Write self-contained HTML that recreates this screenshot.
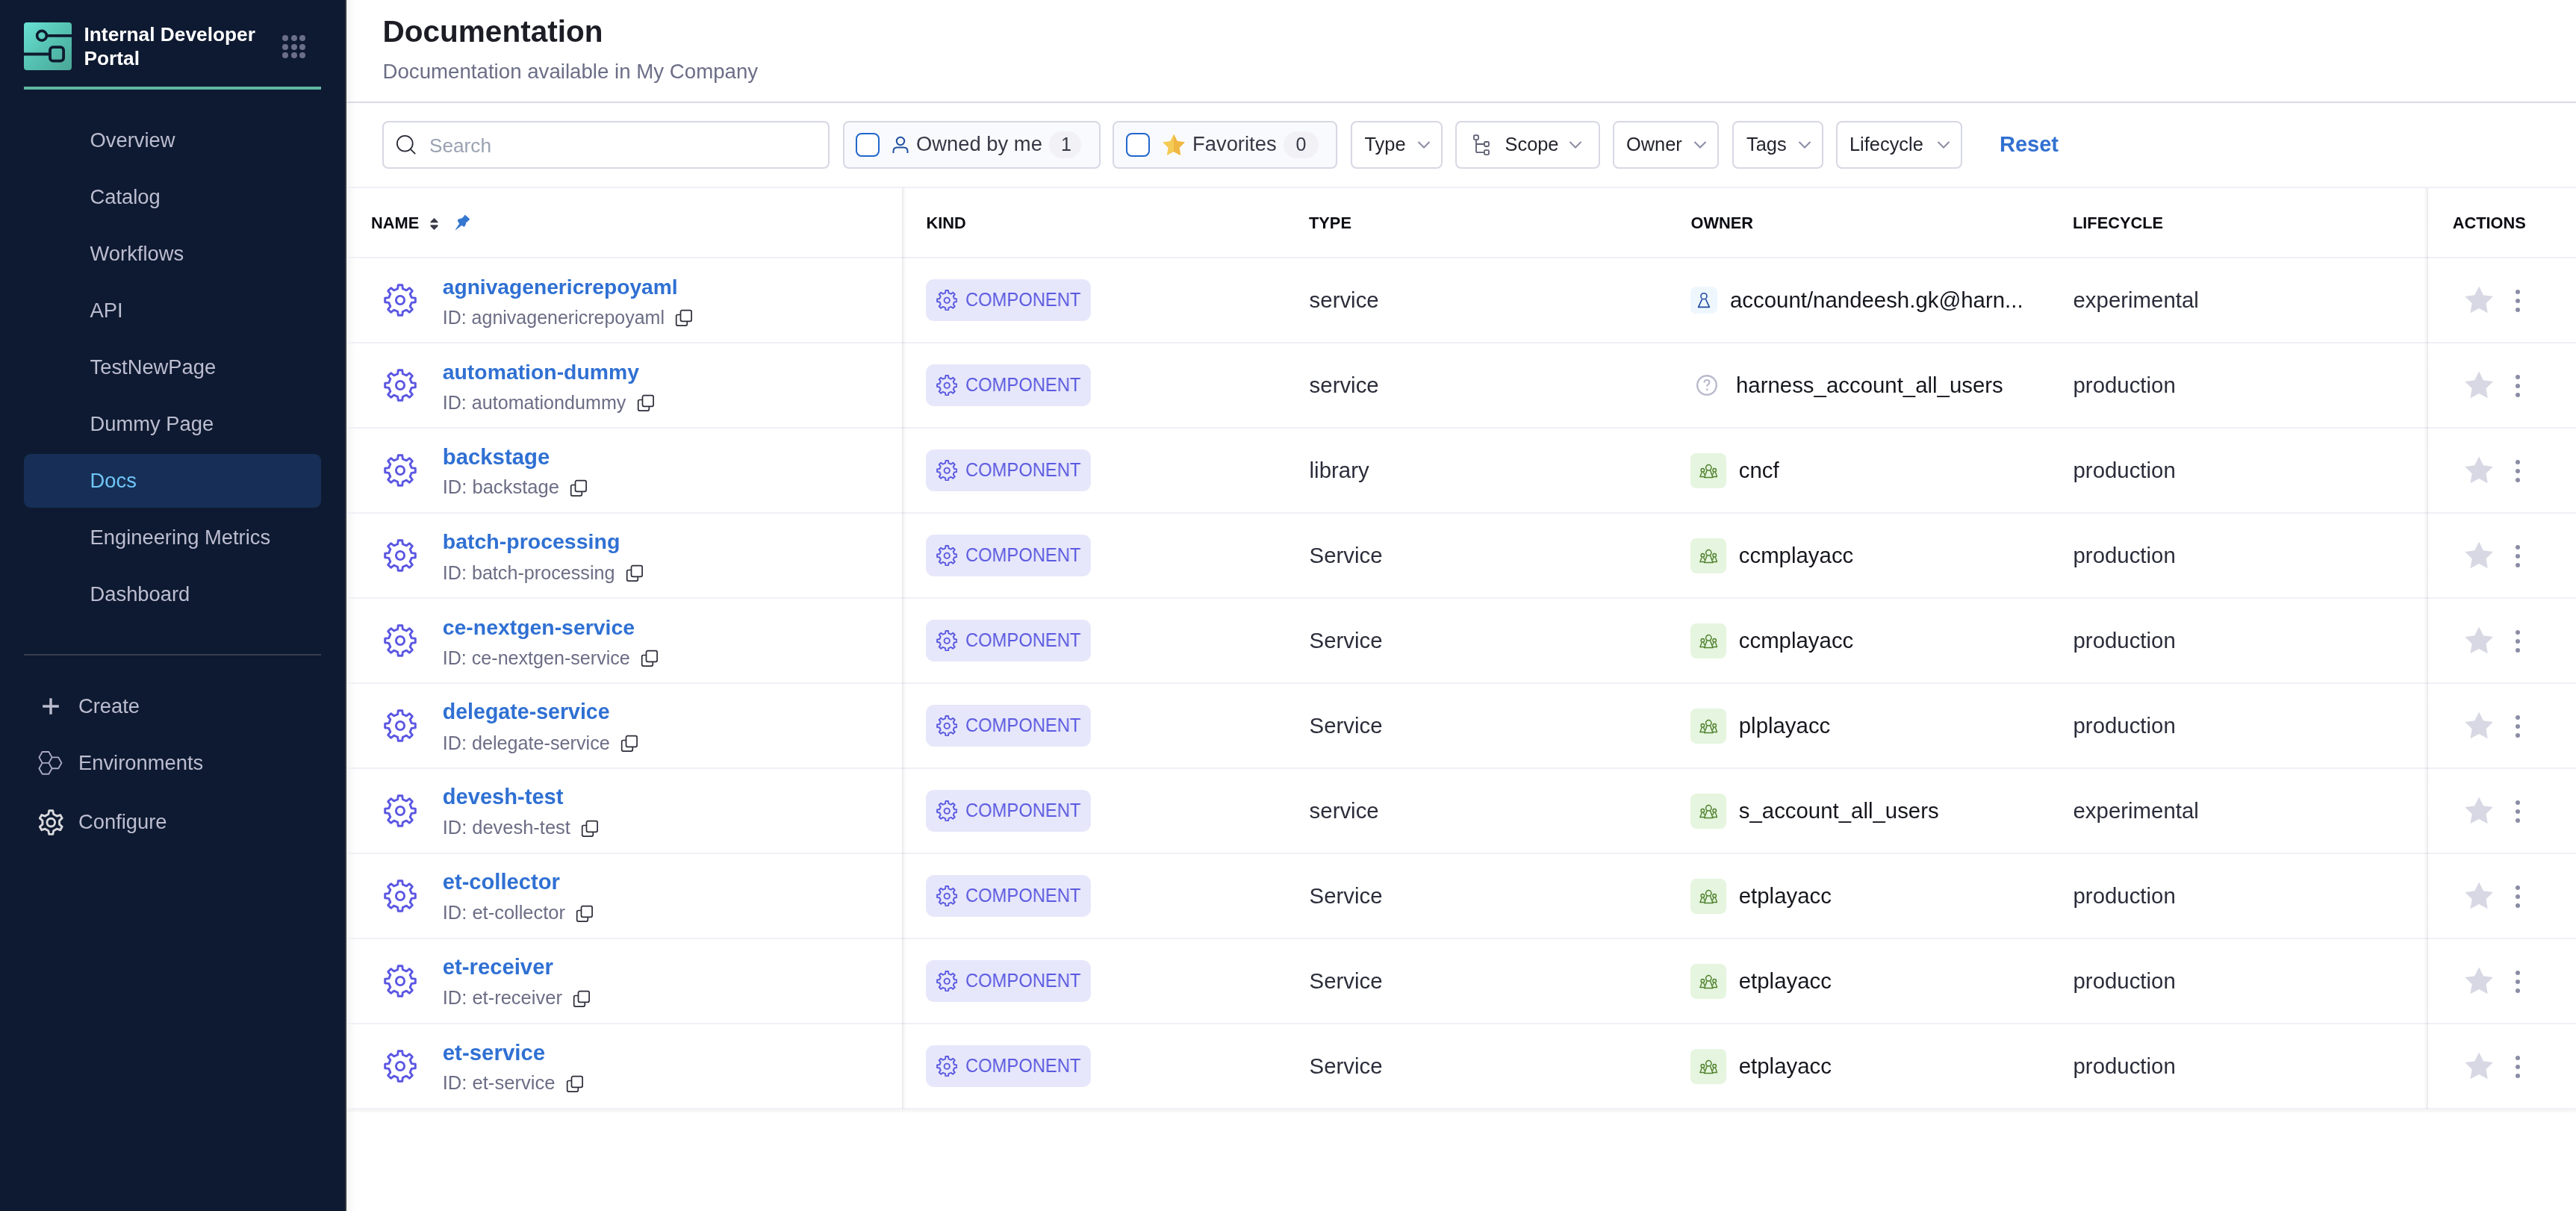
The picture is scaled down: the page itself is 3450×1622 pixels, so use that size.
<!DOCTYPE html><html><head><meta charset="utf-8"><style>
html,body{margin:0;padding:0;}
body{width:3450px;height:1622px;overflow:hidden;position:relative;background:#ffffff;font-family:"Liberation Sans", sans-serif;}
#root{position:absolute;left:0;top:0;width:3450px;height:1622px;will-change:transform;}
svg{display:block}
</style></head><body><div id="root">
<div style="position:absolute;left:0px;top:0px;width:463px;height:1622px;background:#0e1a31;"></div>
<div style="position:absolute;left:462px;top:0px;width:2px;height:1622px;background:#33363f;"></div>
<div style="position:absolute;left:464px;top:0;width:16px;height:1622px;background:linear-gradient(to right,rgba(0,0,0,0.05),rgba(0,0,0,0.022) 35%,rgba(0,0,0,0.006) 70%,rgba(0,0,0,0));"></div>
<div style="position:absolute;left:32px;top:30px;width:64px;height:64px;border-radius:4px;background:linear-gradient(135deg,#69e2d4 0%,#55c2b2 50%,#4aa697 100%);overflow:hidden">
<svg width="64" height="64" viewBox="0 0 64 64" style="position:absolute;left:0;top:0">
<circle cx="24" cy="17.8" r="6.4" fill="none" stroke="#0f1a2f" stroke-width="3.6"/>
<line x1="30" y1="17.8" x2="64" y2="17.8" stroke="#0f1a2f" stroke-width="3.8"/>
<line x1="0" y1="42.6" x2="35" y2="42.6" stroke="#0f1a2f" stroke-width="4"/>
<rect x="35" y="33.2" width="18.1" height="18.5" rx="4" fill="none" stroke="#0f1a2f" stroke-width="3.8"/>
</svg></div>
<div style="position:absolute;left:112.50px;top:32.73px;font-size:26.30px;line-height:26.30px;color:#ffffff;font-weight:700;white-space:nowrap;">Internal Developer</div>
<div style="position:absolute;left:112.50px;top:65.23px;font-size:26.30px;line-height:26.30px;color:#ffffff;font-weight:700;white-space:nowrap;">Portal</div>
<div style="position:absolute;left:378.0px;top:47.0px;width:8px;height:8px;border-radius:50%;background:#6c6f88"></div>
<div style="position:absolute;left:378.0px;top:58.6px;width:8px;height:8px;border-radius:50%;background:#6c6f88"></div>
<div style="position:absolute;left:378.0px;top:70.2px;width:8px;height:8px;border-radius:50%;background:#6c6f88"></div>
<div style="position:absolute;left:389.6px;top:47.0px;width:8px;height:8px;border-radius:50%;background:#6c6f88"></div>
<div style="position:absolute;left:389.6px;top:58.6px;width:8px;height:8px;border-radius:50%;background:#6c6f88"></div>
<div style="position:absolute;left:389.6px;top:70.2px;width:8px;height:8px;border-radius:50%;background:#6c6f88"></div>
<div style="position:absolute;left:401.2px;top:47.0px;width:8px;height:8px;border-radius:50%;background:#6c6f88"></div>
<div style="position:absolute;left:401.2px;top:58.6px;width:8px;height:8px;border-radius:50%;background:#6c6f88"></div>
<div style="position:absolute;left:401.2px;top:70.2px;width:8px;height:8px;border-radius:50%;background:#6c6f88"></div>
<div style="position:absolute;left:32px;top:116px;width:398px;height:4px;background:#5fb9a1;"></div>
<div style="position:absolute;left:120.50px;top:173.85px;font-size:27.35px;line-height:27.35px;color:#bcbdd0;white-space:nowrap;">Overview</div>
<div style="position:absolute;left:120.50px;top:249.85px;font-size:27.35px;line-height:27.35px;color:#bcbdd0;white-space:nowrap;">Catalog</div>
<div style="position:absolute;left:120.50px;top:325.85px;font-size:27.35px;line-height:27.35px;color:#bcbdd0;white-space:nowrap;">Workflows</div>
<div style="position:absolute;left:120.50px;top:401.85px;font-size:27.35px;line-height:27.35px;color:#bcbdd0;white-space:nowrap;">API</div>
<div style="position:absolute;left:120.50px;top:477.85px;font-size:27.35px;line-height:27.35px;color:#bcbdd0;white-space:nowrap;">TestNewPage</div>
<div style="position:absolute;left:120.50px;top:553.85px;font-size:27.35px;line-height:27.35px;color:#bcbdd0;white-space:nowrap;">Dummy Page</div>
<div style="position:absolute;left:32px;top:608px;width:398px;height:72px;background:#172f56;border-radius:9px;"></div>
<div style="position:absolute;left:120.50px;top:629.85px;font-size:27.35px;line-height:27.35px;color:#6fc6f7;white-space:nowrap;">Docs</div>
<div style="position:absolute;left:120.50px;top:705.85px;font-size:27.35px;line-height:27.35px;color:#bcbdd0;white-space:nowrap;">Engineering Metrics</div>
<div style="position:absolute;left:120.50px;top:781.85px;font-size:27.35px;line-height:27.35px;color:#bcbdd0;white-space:nowrap;">Dashboard</div>
<div style="position:absolute;left:32px;top:876px;width:398px;height:2px;background:#393e4e;"></div>
<svg style="position:absolute;left:56px;top:934px" width="24" height="24" viewBox="0 0 24 24"><path d="M12 1.2V22.8M1.2 12H22.8" stroke="#bcbdd0" stroke-width="3.4"/></svg>
<div style="position:absolute;left:105.00px;top:931.85px;font-size:27.35px;line-height:27.35px;color:#bcbdd0;white-space:nowrap;">Create</div>
<svg style="position:absolute;left:44px;top:996px" width="50" height="50" viewBox="0 0 50 50"><path d="M25.60,18.40 L21.30,25.85 L12.70,25.85 L8.40,18.40 L12.70,10.95 L21.30,10.95 Z M38.50,25.85 L34.20,33.30 L25.60,33.30 L21.30,25.85 L25.60,18.40 L34.20,18.40 Z M25.60,33.30 L21.30,40.75 L12.70,40.75 L8.40,33.30 L12.70,25.85 L21.30,25.85 Z" fill="none" stroke="#a9aac1" stroke-width="1.9" stroke-linejoin="round"/></svg>
<div style="position:absolute;left:105.00px;top:1008.10px;font-size:27.35px;line-height:27.35px;color:#bcbdd0;white-space:nowrap;">Environments</div>
<svg style="position:absolute;left:44px;top:1076px" width="50" height="50" viewBox="0 0 50 50"><path d="M20.78,14.53 L21.75,9.80 L26.75,9.80 L27.72,14.53 L32.10,17.06 L36.68,15.53 L39.19,19.87 L35.57,23.07 L35.57,28.13 L39.19,31.33 L36.68,35.67 L32.10,34.14 L27.72,36.67 L26.75,41.40 L21.75,41.40 L20.78,36.67 L16.40,34.14 L11.82,35.67 L9.31,31.33 L12.93,28.13 L12.93,23.07 L9.31,19.87 L11.82,15.53 L16.40,17.06 Z" fill="none" stroke="#d9d9dc" stroke-width="2.9" stroke-linejoin="round"/><circle cx="24.25" cy="25.6" r="5.35" fill="none" stroke="#d9d9dc" stroke-width="2.9"/></svg>
<div style="position:absolute;left:105.00px;top:1086.85px;font-size:27.35px;line-height:27.35px;color:#bcbdd0;white-space:nowrap;">Configure</div>
<div style="position:absolute;left:512.50px;top:22.19px;font-size:40.54px;line-height:40.54px;color:#1c1d25;font-weight:700;white-space:nowrap;">Documentation</div>
<div style="position:absolute;left:512.50px;top:81.58px;font-size:27.67px;line-height:27.67px;color:#6b6e86;white-space:nowrap;">Documentation available in My Company</div>
<div style="position:absolute;left:464px;top:136px;width:2986px;height:2px;background:#d9dae6;"></div>
<div style="position:absolute;left:512px;top:162px;width:595px;height:60px;border:2px solid #d7d8e4;border-radius:8px;background:#ffffff"></div>
<svg style="position:absolute;left:529px;top:180px" width="30" height="30" viewBox="0 0 30 30"><circle cx="13.3" cy="12.3" r="10.4" fill="none" stroke="#2a2b38" stroke-width="1.8"/><path d="M20.8 19.8L27.2 26.2" stroke="#2a2b38" stroke-width="1.8"/></svg>
<div style="position:absolute;left:575.00px;top:181.82px;font-size:26.20px;line-height:26.20px;color:#9aa2b1;white-space:nowrap;">Search</div>
<div style="position:absolute;left:1129px;top:162px;width:341px;height:60px;border:2px solid #d7d8e4;border-radius:8px;background:#f9fafd"></div>
<div style="position:absolute;left:1146px;top:178px;width:28px;height:28px;border:2px solid #2167cd;border-radius:8px;background:#fff"></div>
<svg style="position:absolute;left:1194px;top:181px" width="24" height="26" viewBox="0 0 24 26"><circle cx="12" cy="8" r="5.2" fill="none" stroke="#1f4fa1" stroke-width="2"/><path d="M2.5 24V21.5C2.5 18.5 4.5 16.5 7.5 16.5H16.5C19.5 16.5 21.5 18.5 21.5 21.5V24" fill="none" stroke="#1f4fa1" stroke-width="2"/></svg>
<div style="position:absolute;left:1227.00px;top:179.31px;font-size:27.39px;line-height:27.39px;color:#363845;white-space:nowrap;">Owned by me</div>
<div style="position:absolute;left:1405px;top:176px;width:43px;height:36px;border-radius:18px;background:#f1f1f6"></div>
<div style="position:absolute;left:1421.00px;top:181.34px;font-size:25.00px;line-height:25.00px;color:#363845;white-space:nowrap;">1</div>
<div style="position:absolute;left:1490px;top:162px;width:297px;height:60px;border:2px solid #d7d8e4;border-radius:8px;background:#f9fafd"></div>
<div style="position:absolute;left:1508px;top:178px;width:28px;height:28px;border:2px solid #2167cd;border-radius:8px;background:#fff"></div>
<svg style="position:absolute;left:1555px;top:178px" width="34" height="34" viewBox="0 0 34 34"><defs><clipPath id="rh"><rect x="17" y="0" width="17" height="34"/></clipPath></defs><path d="M17.00,1.70 L21.64,10.91 L31.84,12.48 L24.51,19.74 L26.17,29.92 L17.00,25.20 L7.83,29.92 L9.49,19.74 L2.16,12.48 L12.36,10.91 Z" fill="#f4cb55"/><path d="M17.00,1.70 L21.64,10.91 L31.84,12.48 L24.51,19.74 L26.17,29.92 L17.00,25.20 L7.83,29.92 L9.49,19.74 L2.16,12.48 L12.36,10.91 Z" fill="#efb643" clip-path="url(#rh)"/></svg>
<div style="position:absolute;left:1597.00px;top:179.31px;font-size:27.39px;line-height:27.39px;color:#363845;white-space:nowrap;">Favorites</div>
<div style="position:absolute;left:1719px;top:176px;width:47px;height:36px;border-radius:18px;background:#f1f1f6"></div>
<div style="position:absolute;left:1735.50px;top:181.34px;font-size:25.00px;line-height:25.00px;color:#363845;white-space:nowrap;">0</div>
<div style="position:absolute;left:1809px;top:162px;width:119px;height:60px;border:2px solid #d7d8e4;border-radius:8px;background:#ffffff"></div>
<div style="position:absolute;left:1827.50px;top:181.00px;font-size:25.40px;line-height:25.40px;color:#23242d;white-space:nowrap;">Type</div>
<svg style="position:absolute;left:1898px;top:188px" width="18" height="12" viewBox="0 0 18 12"><path d="M1.5 2L9 9.5L16.5 2" fill="none" stroke="#8a8ca3" stroke-width="2"/></svg>
<div style="position:absolute;left:1949px;top:162px;width:190px;height:60px;border:2px solid #d7d8e4;border-radius:8px;background:#ffffff"></div>
<svg style="position:absolute;left:1971px;top:178px" width="28" height="32" viewBox="0 0 28 32"><rect x="3" y="3.1" width="6" height="6" rx="1.4" fill="none" stroke="#5d5f73" stroke-width="1.8"/><rect x="17" y="12" width="6" height="6" rx="1.4" fill="none" stroke="#5d5f73" stroke-width="1.8"/><rect x="17" y="23.2" width="6" height="6" rx="1.4" fill="none" stroke="#5d5f73" stroke-width="1.8"/><path d="M6 9.1V24.4Q6 26.2 7.8 26.2H17M6 15H17" fill="none" stroke="#5d5f73" stroke-width="1.8"/></svg>
<div style="position:absolute;left:2015.50px;top:181.00px;font-size:25.40px;line-height:25.40px;color:#23242d;white-space:nowrap;">Scope</div>
<svg style="position:absolute;left:2101px;top:188px" width="18" height="12" viewBox="0 0 18 12"><path d="M1.5 2L9 9.5L16.5 2" fill="none" stroke="#8a8ca3" stroke-width="2"/></svg>
<div style="position:absolute;left:2160px;top:162px;width:138px;height:60px;border:2px solid #d7d8e4;border-radius:8px;background:#ffffff"></div>
<div style="position:absolute;left:2178.00px;top:181.00px;font-size:25.40px;line-height:25.40px;color:#23242d;white-space:nowrap;">Owner</div>
<svg style="position:absolute;left:2268px;top:188px" width="18" height="12" viewBox="0 0 18 12"><path d="M1.5 2L9 9.5L16.5 2" fill="none" stroke="#8a8ca3" stroke-width="2"/></svg>
<div style="position:absolute;left:2320px;top:162px;width:118px;height:60px;border:2px solid #d7d8e4;border-radius:8px;background:#ffffff"></div>
<div style="position:absolute;left:2339.00px;top:181.00px;font-size:25.40px;line-height:25.40px;color:#23242d;white-space:nowrap;">Tags</div>
<svg style="position:absolute;left:2408px;top:188px" width="18" height="12" viewBox="0 0 18 12"><path d="M1.5 2L9 9.5L16.5 2" fill="none" stroke="#8a8ca3" stroke-width="2"/></svg>
<div style="position:absolute;left:2459px;top:162px;width:165px;height:60px;border:2px solid #d7d8e4;border-radius:8px;background:#ffffff"></div>
<div style="position:absolute;left:2477.00px;top:181.00px;font-size:25.40px;line-height:25.40px;color:#23242d;white-space:nowrap;">Lifecycle</div>
<svg style="position:absolute;left:2594px;top:188px" width="18" height="12" viewBox="0 0 18 12"><path d="M1.5 2L9 9.5L16.5 2" fill="none" stroke="#8a8ca3" stroke-width="2"/></svg>
<div style="position:absolute;left:2678.00px;top:179.44px;font-size:29.02px;line-height:29.02px;color:#3170d1;font-weight:700;white-space:nowrap;">Reset</div>
<div style="position:absolute;left:464px;top:250px;width:2986px;height:2px;background:#f0f0f6;"></div>
<div style="position:absolute;left:464px;top:344px;width:2986px;height:2px;background:#f0f0f6;"></div>
<div style="position:absolute;left:497.10px;top:287.55px;font-size:21.80px;line-height:21.80px;color:#0b0c12;font-weight:700;white-space:nowrap;">NAME</div>
<div style="position:absolute;left:1240.50px;top:287.55px;font-size:21.80px;line-height:21.80px;color:#0b0c12;font-weight:700;white-space:nowrap;">KIND</div>
<div style="position:absolute;left:1753.00px;top:287.55px;font-size:21.80px;line-height:21.80px;color:#0b0c12;font-weight:700;white-space:nowrap;">TYPE</div>
<div style="position:absolute;left:2264.50px;top:287.55px;font-size:21.80px;line-height:21.80px;color:#0b0c12;font-weight:700;white-space:nowrap;">OWNER</div>
<div style="position:absolute;left:2776.00px;top:287.55px;font-size:21.80px;line-height:21.80px;color:#0b0c12;font-weight:700;white-space:nowrap;">LIFECYCLE</div>
<div style="position:absolute;left:3284.75px;top:287.55px;font-size:21.80px;line-height:21.80px;color:#0b0c12;font-weight:700;white-space:nowrap;">ACTIONS</div>
<svg style="position:absolute;left:575.5px;top:292px" width="11" height="16" viewBox="0 0 11 16"><path d="M5.5 0L10.5 5V6.3H0.5V5Z M5.5 16L10.5 11V9.3H0.5V11Z" fill="#3a3b48"/></svg>
<svg style="position:absolute;left:604px;top:282px" width="30" height="30" viewBox="0 0 30 30"><path d="M6.4 25.6L11.6 17.8L9.1 13.1L11.1 11.4L14.1 11.1L17.3 8.4L18.7 6.2L24.8 11.6L22.3 14.2L19.6 16.3L19.5 18L17.6 21.6L14.6 19.5L12.9 20.5Z" fill="#3576cf" stroke="#3576cf" stroke-width="1" stroke-linejoin="round"/></svg>
<svg style="position:absolute;left:514px;top:380px" width="44" height="44" viewBox="0 0 44 44"><path d="M18.60,6.78 L19.27,1.68 L24.73,1.68 L25.40,6.78 L30.36,8.83 L34.44,5.70 L38.30,9.56 L35.17,13.64 L37.22,18.60 L42.32,19.27 L42.32,24.73 L37.22,25.40 L35.17,30.36 L38.30,34.44 L34.44,38.30 L30.36,35.17 L25.40,37.22 L24.73,42.32 L19.27,42.32 L18.60,37.22 L13.64,35.17 L9.56,38.30 L5.70,34.44 L8.83,30.36 L6.78,25.40 L1.68,24.73 L1.68,19.27 L6.78,18.60 L8.83,13.64 L5.70,9.56 L9.56,5.70 L13.64,8.83 Z" fill="none" stroke="#5b57e2" stroke-width="2.9" stroke-linejoin="round"/><circle cx="22" cy="22" r="5.6" fill="none" stroke="#5b57e2" stroke-width="2.9"/></svg>
<div style="position:absolute;left:592.75px;top:369.73px;font-size:28.19px;line-height:28.19px;color:#2f70d3;font-weight:700;white-space:nowrap;">agnivagenericrepoyaml</div>
<div style="position:absolute;left:592.75px;top:412.85px;font-size:24.99px;line-height:24.99px;color:#6b6d85;white-space:nowrap;">ID: agnivagenericrepoyaml</div>
<svg style="position:absolute;left:904.1px;top:414.00px" width="24" height="24" viewBox="0 0 24 24"><path d="M7.5 7.5H3.7A2 2 0 0 0 1.7 9.5V20.1A2 2 0 0 0 3.7 22.1H14.3A2 2 0 0 0 16.3 20.1V16.3" fill="none" stroke="#2b2c38" stroke-width="1.7"/><rect x="7.5" y="1.7" width="14.6" height="14.6" rx="2" fill="none" stroke="#2b2c38" stroke-width="1.7"/></svg>
<div style="position:absolute;left:1240px;top:374.00px;width:221px;height:56px;border-radius:11px;background:#e7e7fb"></div>
<svg style="position:absolute;left:1253.75px;top:387.75px" width="28.5" height="28.5" viewBox="0 0 44 44"><path d="M18.60,6.78 L19.27,1.68 L24.73,1.68 L25.40,6.78 L30.36,8.83 L34.44,5.70 L38.30,9.56 L35.17,13.64 L37.22,18.60 L42.32,19.27 L42.32,24.73 L37.22,25.40 L35.17,30.36 L38.30,34.44 L34.44,38.30 L30.36,35.17 L25.40,37.22 L24.73,42.32 L19.27,42.32 L18.60,37.22 L13.64,35.17 L9.56,38.30 L5.70,34.44 L8.83,30.36 L6.78,25.40 L1.68,24.73 L1.68,19.27 L6.78,18.60 L8.83,13.64 L5.70,9.56 L9.56,5.70 L13.64,8.83 Z" fill="none" stroke="#5b5ae0" stroke-width="3.0" stroke-linejoin="round"/><circle cx="22" cy="22" r="5.6" fill="none" stroke="#5b5ae0" stroke-width="3.0"/></svg>
<div style="position:absolute;left:1293.00px;top:389.00px;font-size:25.40px;line-height:25.40px;color:#5b5ae0;white-space:nowrap;transform:scaleX(0.9358);transform-origin:0.00px 0;">COMPONENT</div>
<div style="position:absolute;left:1753.60px;top:387.11px;font-size:29.40px;line-height:29.40px;color:#2b2d3a;white-space:nowrap;">service</div>
<div style="position:absolute;left:2264px;top:384.00px;width:36px;height:36px;border-radius:7px;background:#eef7fd"></div>
<svg style="position:absolute;left:2272px;top:390.00px" width="20" height="24" viewBox="0 0 20 24"><circle cx="10" cy="6.7" r="4" fill="none" stroke="#1f4aa3" stroke-width="1.6"/><path d="M7.6 10.6L2.6 21.4H17.4L12.4 10.6" fill="none" stroke="#1f4aa3" stroke-width="1.6" stroke-linejoin="round"/></svg>
<div style="position:absolute;left:2317.00px;top:387.11px;font-size:29.40px;line-height:29.40px;color:#16171e;white-space:nowrap;">account/nandeesh.gk@harn...</div>
<div style="position:absolute;left:2776.50px;top:387.11px;font-size:29.40px;line-height:29.40px;color:#2b2d3a;white-space:nowrap;">experimental</div>
<svg style="position:absolute;left:3300px;top:383.00px" width="40" height="40" viewBox="0 0 40 40"><path d="M20.10,0.40 L25.92,12.19 L38.93,14.08 L29.52,23.26 L31.74,36.22 L20.10,30.10 L8.46,36.22 L10.68,23.26 L1.27,14.08 L14.28,12.19 Z" fill="#d7d8e3"/></svg>
<div style="position:absolute;left:3369px;top:388.00px;width:6px;height:6px;border-radius:50%;background:#8b8ca5"></div>
<div style="position:absolute;left:3369px;top:400.00px;width:6px;height:6px;border-radius:50%;background:#8b8ca5"></div>
<div style="position:absolute;left:3369px;top:412.00px;width:6px;height:6px;border-radius:50%;background:#8b8ca5"></div>
<div style="position:absolute;left:464px;top:458.00px;width:2986px;height:2px;background:#f0f0f6"></div>
<svg style="position:absolute;left:514px;top:494px" width="44" height="44" viewBox="0 0 44 44"><path d="M18.60,6.78 L19.27,1.68 L24.73,1.68 L25.40,6.78 L30.36,8.83 L34.44,5.70 L38.30,9.56 L35.17,13.64 L37.22,18.60 L42.32,19.27 L42.32,24.73 L37.22,25.40 L35.17,30.36 L38.30,34.44 L34.44,38.30 L30.36,35.17 L25.40,37.22 L24.73,42.32 L19.27,42.32 L18.60,37.22 L13.64,35.17 L9.56,38.30 L5.70,34.44 L8.83,30.36 L6.78,25.40 L1.68,24.73 L1.68,19.27 L6.78,18.60 L8.83,13.64 L5.70,9.56 L9.56,5.70 L13.64,8.83 Z" fill="none" stroke="#5b57e2" stroke-width="2.9" stroke-linejoin="round"/><circle cx="22" cy="22" r="5.6" fill="none" stroke="#5b57e2" stroke-width="2.9"/></svg>
<div style="position:absolute;left:592.75px;top:483.58px;font-size:28.38px;line-height:28.38px;color:#2f70d3;font-weight:700;white-space:nowrap;">automation-dummy</div>
<div style="position:absolute;left:592.75px;top:526.74px;font-size:25.12px;line-height:25.12px;color:#6b6d85;white-space:nowrap;">ID: automationdummy</div>
<svg style="position:absolute;left:852.6px;top:528.00px" width="24" height="24" viewBox="0 0 24 24"><path d="M7.5 7.5H3.7A2 2 0 0 0 1.7 9.5V20.1A2 2 0 0 0 3.7 22.1H14.3A2 2 0 0 0 16.3 20.1V16.3" fill="none" stroke="#2b2c38" stroke-width="1.7"/><rect x="7.5" y="1.7" width="14.6" height="14.6" rx="2" fill="none" stroke="#2b2c38" stroke-width="1.7"/></svg>
<div style="position:absolute;left:1240px;top:488.00px;width:221px;height:56px;border-radius:11px;background:#e7e7fb"></div>
<svg style="position:absolute;left:1253.75px;top:501.75px" width="28.5" height="28.5" viewBox="0 0 44 44"><path d="M18.60,6.78 L19.27,1.68 L24.73,1.68 L25.40,6.78 L30.36,8.83 L34.44,5.70 L38.30,9.56 L35.17,13.64 L37.22,18.60 L42.32,19.27 L42.32,24.73 L37.22,25.40 L35.17,30.36 L38.30,34.44 L34.44,38.30 L30.36,35.17 L25.40,37.22 L24.73,42.32 L19.27,42.32 L18.60,37.22 L13.64,35.17 L9.56,38.30 L5.70,34.44 L8.83,30.36 L6.78,25.40 L1.68,24.73 L1.68,19.27 L6.78,18.60 L8.83,13.64 L5.70,9.56 L9.56,5.70 L13.64,8.83 Z" fill="none" stroke="#5b5ae0" stroke-width="3.0" stroke-linejoin="round"/><circle cx="22" cy="22" r="5.6" fill="none" stroke="#5b5ae0" stroke-width="3.0"/></svg>
<div style="position:absolute;left:1293.00px;top:503.00px;font-size:25.40px;line-height:25.40px;color:#5b5ae0;white-space:nowrap;transform:scaleX(0.9358);transform-origin:0.00px 0;">COMPONENT</div>
<div style="position:absolute;left:1753.60px;top:501.11px;font-size:29.40px;line-height:29.40px;color:#2b2d3a;white-space:nowrap;">service</div>
<svg style="position:absolute;left:2271px;top:501.00px" width="30" height="30" viewBox="0 0 30 30"><circle cx="15" cy="15" r="12.8" fill="none" stroke="#b9bacd" stroke-width="2.4"/><path d="M11.5 11.5C11.5 9.3 13.1 8 15 8C17 8 18.5 9.3 18.5 11.2C18.5 13.5 15.2 13.8 15.2 16.5" fill="none" stroke="#b9bacd" stroke-width="2.2"/><circle cx="15.2" cy="20.8" r="1.4" fill="#b9bacd"/></svg>
<div style="position:absolute;left:2325.00px;top:501.11px;font-size:29.40px;line-height:29.40px;color:#16171e;white-space:nowrap;">harness_account_all_users</div>
<div style="position:absolute;left:2776.50px;top:501.11px;font-size:29.40px;line-height:29.40px;color:#2b2d3a;white-space:nowrap;">production</div>
<svg style="position:absolute;left:3300px;top:497.00px" width="40" height="40" viewBox="0 0 40 40"><path d="M20.10,0.40 L25.92,12.19 L38.93,14.08 L29.52,23.26 L31.74,36.22 L20.10,30.10 L8.46,36.22 L10.68,23.26 L1.27,14.08 L14.28,12.19 Z" fill="#d7d8e3"/></svg>
<div style="position:absolute;left:3369px;top:502.00px;width:6px;height:6px;border-radius:50%;background:#8b8ca5"></div>
<div style="position:absolute;left:3369px;top:514.00px;width:6px;height:6px;border-radius:50%;background:#8b8ca5"></div>
<div style="position:absolute;left:3369px;top:526.00px;width:6px;height:6px;border-radius:50%;background:#8b8ca5"></div>
<div style="position:absolute;left:464px;top:572.00px;width:2986px;height:2px;background:#f0f0f6"></div>
<svg style="position:absolute;left:514px;top:608px" width="44" height="44" viewBox="0 0 44 44"><path d="M18.60,6.78 L19.27,1.68 L24.73,1.68 L25.40,6.78 L30.36,8.83 L34.44,5.70 L38.30,9.56 L35.17,13.64 L37.22,18.60 L42.32,19.27 L42.32,24.73 L37.22,25.40 L35.17,30.36 L38.30,34.44 L34.44,38.30 L30.36,35.17 L25.40,37.22 L24.73,42.32 L19.27,42.32 L18.60,37.22 L13.64,35.17 L9.56,38.30 L5.70,34.44 L8.83,30.36 L6.78,25.40 L1.68,24.73 L1.68,19.27 L6.78,18.60 L8.83,13.64 L5.70,9.56 L9.56,5.70 L13.64,8.83 Z" fill="none" stroke="#5b57e2" stroke-width="2.9" stroke-linejoin="round"/><circle cx="22" cy="22" r="5.6" fill="none" stroke="#5b57e2" stroke-width="2.9"/></svg>
<div style="position:absolute;left:592.75px;top:596.76px;font-size:29.34px;line-height:29.34px;color:#2f70d3;font-weight:700;white-space:nowrap;">backstage</div>
<div style="position:absolute;left:592.75px;top:640.38px;font-size:25.54px;line-height:25.54px;color:#6b6d85;white-space:nowrap;">ID: backstage</div>
<svg style="position:absolute;left:763.1px;top:642.00px" width="24" height="24" viewBox="0 0 24 24"><path d="M7.5 7.5H3.7A2 2 0 0 0 1.7 9.5V20.1A2 2 0 0 0 3.7 22.1H14.3A2 2 0 0 0 16.3 20.1V16.3" fill="none" stroke="#2b2c38" stroke-width="1.7"/><rect x="7.5" y="1.7" width="14.6" height="14.6" rx="2" fill="none" stroke="#2b2c38" stroke-width="1.7"/></svg>
<div style="position:absolute;left:1240px;top:602.00px;width:221px;height:56px;border-radius:11px;background:#e7e7fb"></div>
<svg style="position:absolute;left:1253.75px;top:615.75px" width="28.5" height="28.5" viewBox="0 0 44 44"><path d="M18.60,6.78 L19.27,1.68 L24.73,1.68 L25.40,6.78 L30.36,8.83 L34.44,5.70 L38.30,9.56 L35.17,13.64 L37.22,18.60 L42.32,19.27 L42.32,24.73 L37.22,25.40 L35.17,30.36 L38.30,34.44 L34.44,38.30 L30.36,35.17 L25.40,37.22 L24.73,42.32 L19.27,42.32 L18.60,37.22 L13.64,35.17 L9.56,38.30 L5.70,34.44 L8.83,30.36 L6.78,25.40 L1.68,24.73 L1.68,19.27 L6.78,18.60 L8.83,13.64 L5.70,9.56 L9.56,5.70 L13.64,8.83 Z" fill="none" stroke="#5b5ae0" stroke-width="3.0" stroke-linejoin="round"/><circle cx="22" cy="22" r="5.6" fill="none" stroke="#5b5ae0" stroke-width="3.0"/></svg>
<div style="position:absolute;left:1293.00px;top:617.00px;font-size:25.40px;line-height:25.40px;color:#5b5ae0;white-space:nowrap;transform:scaleX(0.9358);transform-origin:0.00px 0;">COMPONENT</div>
<div style="position:absolute;left:1753.60px;top:615.11px;font-size:29.40px;line-height:29.40px;color:#2b2d3a;white-space:nowrap;">library</div>
<div style="position:absolute;left:2264px;top:606.50px;width:47.5px;height:47px;border-radius:8px;background:#e5f5df"></div>
<svg style="position:absolute;left:2275.6px;top:620.80px" width="24.6" height="21.1" viewBox="0 0 28 24"><circle cx="14" cy="6" r="4.2" fill="none" stroke="#51822f" stroke-width="1.7"/><path d="M11.5 10.2L7.5 21H20.5L16.5 10.2" fill="none" stroke="#51822f" stroke-width="1.7" stroke-linejoin="round"/><circle cx="5" cy="10" r="2.6" fill="none" stroke="#51822f" stroke-width="1.6"/><path d="M3.8 12.8L1 20H7.5M6.2 12.8L8 17" fill="none" stroke="#51822f" stroke-width="1.6" stroke-linejoin="round"/><circle cx="23" cy="10" r="2.6" fill="none" stroke="#51822f" stroke-width="1.6"/><path d="M24.2 12.8L27 20H20.5M21.8 12.8L20 17" fill="none" stroke="#51822f" stroke-width="1.6" stroke-linejoin="round"/></svg>
<div style="position:absolute;left:2328.75px;top:615.11px;font-size:29.40px;line-height:29.40px;color:#16171e;white-space:nowrap;">cncf</div>
<div style="position:absolute;left:2776.50px;top:615.11px;font-size:29.40px;line-height:29.40px;color:#2b2d3a;white-space:nowrap;">production</div>
<svg style="position:absolute;left:3300px;top:611.00px" width="40" height="40" viewBox="0 0 40 40"><path d="M20.10,0.40 L25.92,12.19 L38.93,14.08 L29.52,23.26 L31.74,36.22 L20.10,30.10 L8.46,36.22 L10.68,23.26 L1.27,14.08 L14.28,12.19 Z" fill="#d7d8e3"/></svg>
<div style="position:absolute;left:3369px;top:616.00px;width:6px;height:6px;border-radius:50%;background:#8b8ca5"></div>
<div style="position:absolute;left:3369px;top:628.00px;width:6px;height:6px;border-radius:50%;background:#8b8ca5"></div>
<div style="position:absolute;left:3369px;top:640.00px;width:6px;height:6px;border-radius:50%;background:#8b8ca5"></div>
<div style="position:absolute;left:464px;top:686.00px;width:2986px;height:2px;background:#f0f0f6"></div>
<svg style="position:absolute;left:514px;top:722px" width="44" height="44" viewBox="0 0 44 44"><path d="M18.60,6.78 L19.27,1.68 L24.73,1.68 L25.40,6.78 L30.36,8.83 L34.44,5.70 L38.30,9.56 L35.17,13.64 L37.22,18.60 L42.32,19.27 L42.32,24.73 L37.22,25.40 L35.17,30.36 L38.30,34.44 L34.44,38.30 L30.36,35.17 L25.40,37.22 L24.73,42.32 L19.27,42.32 L18.60,37.22 L13.64,35.17 L9.56,38.30 L5.70,34.44 L8.83,30.36 L6.78,25.40 L1.68,24.73 L1.68,19.27 L6.78,18.60 L8.83,13.64 L5.70,9.56 L9.56,5.70 L13.64,8.83 Z" fill="none" stroke="#5b57e2" stroke-width="2.9" stroke-linejoin="round"/><circle cx="22" cy="22" r="5.6" fill="none" stroke="#5b57e2" stroke-width="2.9"/></svg>
<div style="position:absolute;left:592.75px;top:711.48px;font-size:28.50px;line-height:28.50px;color:#2f70d3;font-weight:700;white-space:nowrap;">batch-processing</div>
<div style="position:absolute;left:592.75px;top:754.70px;font-size:25.16px;line-height:25.16px;color:#6b6d85;white-space:nowrap;">ID: batch-processing</div>
<svg style="position:absolute;left:837.6px;top:756.00px" width="24" height="24" viewBox="0 0 24 24"><path d="M7.5 7.5H3.7A2 2 0 0 0 1.7 9.5V20.1A2 2 0 0 0 3.7 22.1H14.3A2 2 0 0 0 16.3 20.1V16.3" fill="none" stroke="#2b2c38" stroke-width="1.7"/><rect x="7.5" y="1.7" width="14.6" height="14.6" rx="2" fill="none" stroke="#2b2c38" stroke-width="1.7"/></svg>
<div style="position:absolute;left:1240px;top:716.00px;width:221px;height:56px;border-radius:11px;background:#e7e7fb"></div>
<svg style="position:absolute;left:1253.75px;top:729.75px" width="28.5" height="28.5" viewBox="0 0 44 44"><path d="M18.60,6.78 L19.27,1.68 L24.73,1.68 L25.40,6.78 L30.36,8.83 L34.44,5.70 L38.30,9.56 L35.17,13.64 L37.22,18.60 L42.32,19.27 L42.32,24.73 L37.22,25.40 L35.17,30.36 L38.30,34.44 L34.44,38.30 L30.36,35.17 L25.40,37.22 L24.73,42.32 L19.27,42.32 L18.60,37.22 L13.64,35.17 L9.56,38.30 L5.70,34.44 L8.83,30.36 L6.78,25.40 L1.68,24.73 L1.68,19.27 L6.78,18.60 L8.83,13.64 L5.70,9.56 L9.56,5.70 L13.64,8.83 Z" fill="none" stroke="#5b5ae0" stroke-width="3.0" stroke-linejoin="round"/><circle cx="22" cy="22" r="5.6" fill="none" stroke="#5b5ae0" stroke-width="3.0"/></svg>
<div style="position:absolute;left:1293.00px;top:731.00px;font-size:25.40px;line-height:25.40px;color:#5b5ae0;white-space:nowrap;transform:scaleX(0.9358);transform-origin:0.00px 0;">COMPONENT</div>
<div style="position:absolute;left:1753.60px;top:729.11px;font-size:29.40px;line-height:29.40px;color:#2b2d3a;white-space:nowrap;">Service</div>
<div style="position:absolute;left:2264px;top:720.50px;width:47.5px;height:47px;border-radius:8px;background:#e5f5df"></div>
<svg style="position:absolute;left:2275.6px;top:734.80px" width="24.6" height="21.1" viewBox="0 0 28 24"><circle cx="14" cy="6" r="4.2" fill="none" stroke="#51822f" stroke-width="1.7"/><path d="M11.5 10.2L7.5 21H20.5L16.5 10.2" fill="none" stroke="#51822f" stroke-width="1.7" stroke-linejoin="round"/><circle cx="5" cy="10" r="2.6" fill="none" stroke="#51822f" stroke-width="1.6"/><path d="M3.8 12.8L1 20H7.5M6.2 12.8L8 17" fill="none" stroke="#51822f" stroke-width="1.6" stroke-linejoin="round"/><circle cx="23" cy="10" r="2.6" fill="none" stroke="#51822f" stroke-width="1.6"/><path d="M24.2 12.8L27 20H20.5M21.8 12.8L20 17" fill="none" stroke="#51822f" stroke-width="1.6" stroke-linejoin="round"/></svg>
<div style="position:absolute;left:2328.75px;top:729.11px;font-size:29.40px;line-height:29.40px;color:#16171e;white-space:nowrap;">ccmplayacc</div>
<div style="position:absolute;left:2776.50px;top:729.11px;font-size:29.40px;line-height:29.40px;color:#2b2d3a;white-space:nowrap;">production</div>
<svg style="position:absolute;left:3300px;top:725.00px" width="40" height="40" viewBox="0 0 40 40"><path d="M20.10,0.40 L25.92,12.19 L38.93,14.08 L29.52,23.26 L31.74,36.22 L20.10,30.10 L8.46,36.22 L10.68,23.26 L1.27,14.08 L14.28,12.19 Z" fill="#d7d8e3"/></svg>
<div style="position:absolute;left:3369px;top:730.00px;width:6px;height:6px;border-radius:50%;background:#8b8ca5"></div>
<div style="position:absolute;left:3369px;top:742.00px;width:6px;height:6px;border-radius:50%;background:#8b8ca5"></div>
<div style="position:absolute;left:3369px;top:754.00px;width:6px;height:6px;border-radius:50%;background:#8b8ca5"></div>
<div style="position:absolute;left:464px;top:800.00px;width:2986px;height:2px;background:#f0f0f6"></div>
<svg style="position:absolute;left:514px;top:836px" width="44" height="44" viewBox="0 0 44 44"><path d="M18.60,6.78 L19.27,1.68 L24.73,1.68 L25.40,6.78 L30.36,8.83 L34.44,5.70 L38.30,9.56 L35.17,13.64 L37.22,18.60 L42.32,19.27 L42.32,24.73 L37.22,25.40 L35.17,30.36 L38.30,34.44 L34.44,38.30 L30.36,35.17 L25.40,37.22 L24.73,42.32 L19.27,42.32 L18.60,37.22 L13.64,35.17 L9.56,38.30 L5.70,34.44 L8.83,30.36 L6.78,25.40 L1.68,24.73 L1.68,19.27 L6.78,18.60 L8.83,13.64 L5.70,9.56 L9.56,5.70 L13.64,8.83 Z" fill="none" stroke="#5b57e2" stroke-width="2.9" stroke-linejoin="round"/><circle cx="22" cy="22" r="5.6" fill="none" stroke="#5b57e2" stroke-width="2.9"/></svg>
<div style="position:absolute;left:592.75px;top:825.56px;font-size:28.40px;line-height:28.40px;color:#2f70d3;font-weight:700;white-space:nowrap;">ce-nextgen-service</div>
<div style="position:absolute;left:592.75px;top:868.75px;font-size:25.10px;line-height:25.10px;color:#6b6d85;white-space:nowrap;">ID: ce-nextgen-service</div>
<svg style="position:absolute;left:858.0px;top:870.00px" width="24" height="24" viewBox="0 0 24 24"><path d="M7.5 7.5H3.7A2 2 0 0 0 1.7 9.5V20.1A2 2 0 0 0 3.7 22.1H14.3A2 2 0 0 0 16.3 20.1V16.3" fill="none" stroke="#2b2c38" stroke-width="1.7"/><rect x="7.5" y="1.7" width="14.6" height="14.6" rx="2" fill="none" stroke="#2b2c38" stroke-width="1.7"/></svg>
<div style="position:absolute;left:1240px;top:830.00px;width:221px;height:56px;border-radius:11px;background:#e7e7fb"></div>
<svg style="position:absolute;left:1253.75px;top:843.75px" width="28.5" height="28.5" viewBox="0 0 44 44"><path d="M18.60,6.78 L19.27,1.68 L24.73,1.68 L25.40,6.78 L30.36,8.83 L34.44,5.70 L38.30,9.56 L35.17,13.64 L37.22,18.60 L42.32,19.27 L42.32,24.73 L37.22,25.40 L35.17,30.36 L38.30,34.44 L34.44,38.30 L30.36,35.17 L25.40,37.22 L24.73,42.32 L19.27,42.32 L18.60,37.22 L13.64,35.17 L9.56,38.30 L5.70,34.44 L8.83,30.36 L6.78,25.40 L1.68,24.73 L1.68,19.27 L6.78,18.60 L8.83,13.64 L5.70,9.56 L9.56,5.70 L13.64,8.83 Z" fill="none" stroke="#5b5ae0" stroke-width="3.0" stroke-linejoin="round"/><circle cx="22" cy="22" r="5.6" fill="none" stroke="#5b5ae0" stroke-width="3.0"/></svg>
<div style="position:absolute;left:1293.00px;top:845.00px;font-size:25.40px;line-height:25.40px;color:#5b5ae0;white-space:nowrap;transform:scaleX(0.9358);transform-origin:0.00px 0;">COMPONENT</div>
<div style="position:absolute;left:1753.60px;top:843.11px;font-size:29.40px;line-height:29.40px;color:#2b2d3a;white-space:nowrap;">Service</div>
<div style="position:absolute;left:2264px;top:834.50px;width:47.5px;height:47px;border-radius:8px;background:#e5f5df"></div>
<svg style="position:absolute;left:2275.6px;top:848.80px" width="24.6" height="21.1" viewBox="0 0 28 24"><circle cx="14" cy="6" r="4.2" fill="none" stroke="#51822f" stroke-width="1.7"/><path d="M11.5 10.2L7.5 21H20.5L16.5 10.2" fill="none" stroke="#51822f" stroke-width="1.7" stroke-linejoin="round"/><circle cx="5" cy="10" r="2.6" fill="none" stroke="#51822f" stroke-width="1.6"/><path d="M3.8 12.8L1 20H7.5M6.2 12.8L8 17" fill="none" stroke="#51822f" stroke-width="1.6" stroke-linejoin="round"/><circle cx="23" cy="10" r="2.6" fill="none" stroke="#51822f" stroke-width="1.6"/><path d="M24.2 12.8L27 20H20.5M21.8 12.8L20 17" fill="none" stroke="#51822f" stroke-width="1.6" stroke-linejoin="round"/></svg>
<div style="position:absolute;left:2328.75px;top:843.11px;font-size:29.40px;line-height:29.40px;color:#16171e;white-space:nowrap;">ccmplayacc</div>
<div style="position:absolute;left:2776.50px;top:843.11px;font-size:29.40px;line-height:29.40px;color:#2b2d3a;white-space:nowrap;">production</div>
<svg style="position:absolute;left:3300px;top:839.00px" width="40" height="40" viewBox="0 0 40 40"><path d="M20.10,0.40 L25.92,12.19 L38.93,14.08 L29.52,23.26 L31.74,36.22 L20.10,30.10 L8.46,36.22 L10.68,23.26 L1.27,14.08 L14.28,12.19 Z" fill="#d7d8e3"/></svg>
<div style="position:absolute;left:3369px;top:844.00px;width:6px;height:6px;border-radius:50%;background:#8b8ca5"></div>
<div style="position:absolute;left:3369px;top:856.00px;width:6px;height:6px;border-radius:50%;background:#8b8ca5"></div>
<div style="position:absolute;left:3369px;top:868.00px;width:6px;height:6px;border-radius:50%;background:#8b8ca5"></div>
<div style="position:absolute;left:464px;top:914.00px;width:2986px;height:2px;background:#f0f0f6"></div>
<svg style="position:absolute;left:514px;top:950px" width="44" height="44" viewBox="0 0 44 44"><path d="M18.60,6.78 L19.27,1.68 L24.73,1.68 L25.40,6.78 L30.36,8.83 L34.44,5.70 L38.30,9.56 L35.17,13.64 L37.22,18.60 L42.32,19.27 L42.32,24.73 L37.22,25.40 L35.17,30.36 L38.30,34.44 L34.44,38.30 L30.36,35.17 L25.40,37.22 L24.73,42.32 L19.27,42.32 L18.60,37.22 L13.64,35.17 L9.56,38.30 L5.70,34.44 L8.83,30.36 L6.78,25.40 L1.68,24.73 L1.68,19.27 L6.78,18.60 L8.83,13.64 L5.70,9.56 L9.56,5.70 L13.64,8.83 Z" fill="none" stroke="#5b57e2" stroke-width="2.9" stroke-linejoin="round"/><circle cx="22" cy="22" r="5.6" fill="none" stroke="#5b57e2" stroke-width="2.9"/></svg>
<div style="position:absolute;left:592.75px;top:939.41px;font-size:28.57px;line-height:28.57px;color:#2f70d3;font-weight:700;white-space:nowrap;">delegate-service</div>
<div style="position:absolute;left:592.75px;top:982.68px;font-size:25.19px;line-height:25.19px;color:#6b6d85;white-space:nowrap;">ID: delegate-service</div>
<svg style="position:absolute;left:830.9px;top:984.00px" width="24" height="24" viewBox="0 0 24 24"><path d="M7.5 7.5H3.7A2 2 0 0 0 1.7 9.5V20.1A2 2 0 0 0 3.7 22.1H14.3A2 2 0 0 0 16.3 20.1V16.3" fill="none" stroke="#2b2c38" stroke-width="1.7"/><rect x="7.5" y="1.7" width="14.6" height="14.6" rx="2" fill="none" stroke="#2b2c38" stroke-width="1.7"/></svg>
<div style="position:absolute;left:1240px;top:944.00px;width:221px;height:56px;border-radius:11px;background:#e7e7fb"></div>
<svg style="position:absolute;left:1253.75px;top:957.75px" width="28.5" height="28.5" viewBox="0 0 44 44"><path d="M18.60,6.78 L19.27,1.68 L24.73,1.68 L25.40,6.78 L30.36,8.83 L34.44,5.70 L38.30,9.56 L35.17,13.64 L37.22,18.60 L42.32,19.27 L42.32,24.73 L37.22,25.40 L35.17,30.36 L38.30,34.44 L34.44,38.30 L30.36,35.17 L25.40,37.22 L24.73,42.32 L19.27,42.32 L18.60,37.22 L13.64,35.17 L9.56,38.30 L5.70,34.44 L8.83,30.36 L6.78,25.40 L1.68,24.73 L1.68,19.27 L6.78,18.60 L8.83,13.64 L5.70,9.56 L9.56,5.70 L13.64,8.83 Z" fill="none" stroke="#5b5ae0" stroke-width="3.0" stroke-linejoin="round"/><circle cx="22" cy="22" r="5.6" fill="none" stroke="#5b5ae0" stroke-width="3.0"/></svg>
<div style="position:absolute;left:1293.00px;top:959.00px;font-size:25.40px;line-height:25.40px;color:#5b5ae0;white-space:nowrap;transform:scaleX(0.9358);transform-origin:0.00px 0;">COMPONENT</div>
<div style="position:absolute;left:1753.60px;top:957.11px;font-size:29.40px;line-height:29.40px;color:#2b2d3a;white-space:nowrap;">Service</div>
<div style="position:absolute;left:2264px;top:948.50px;width:47.5px;height:47px;border-radius:8px;background:#e5f5df"></div>
<svg style="position:absolute;left:2275.6px;top:962.80px" width="24.6" height="21.1" viewBox="0 0 28 24"><circle cx="14" cy="6" r="4.2" fill="none" stroke="#51822f" stroke-width="1.7"/><path d="M11.5 10.2L7.5 21H20.5L16.5 10.2" fill="none" stroke="#51822f" stroke-width="1.7" stroke-linejoin="round"/><circle cx="5" cy="10" r="2.6" fill="none" stroke="#51822f" stroke-width="1.6"/><path d="M3.8 12.8L1 20H7.5M6.2 12.8L8 17" fill="none" stroke="#51822f" stroke-width="1.6" stroke-linejoin="round"/><circle cx="23" cy="10" r="2.6" fill="none" stroke="#51822f" stroke-width="1.6"/><path d="M24.2 12.8L27 20H20.5M21.8 12.8L20 17" fill="none" stroke="#51822f" stroke-width="1.6" stroke-linejoin="round"/></svg>
<div style="position:absolute;left:2328.75px;top:957.11px;font-size:29.40px;line-height:29.40px;color:#16171e;white-space:nowrap;">plplayacc</div>
<div style="position:absolute;left:2776.50px;top:957.11px;font-size:29.40px;line-height:29.40px;color:#2b2d3a;white-space:nowrap;">production</div>
<svg style="position:absolute;left:3300px;top:953.00px" width="40" height="40" viewBox="0 0 40 40"><path d="M20.10,0.40 L25.92,12.19 L38.93,14.08 L29.52,23.26 L31.74,36.22 L20.10,30.10 L8.46,36.22 L10.68,23.26 L1.27,14.08 L14.28,12.19 Z" fill="#d7d8e3"/></svg>
<div style="position:absolute;left:3369px;top:958.00px;width:6px;height:6px;border-radius:50%;background:#8b8ca5"></div>
<div style="position:absolute;left:3369px;top:970.00px;width:6px;height:6px;border-radius:50%;background:#8b8ca5"></div>
<div style="position:absolute;left:3369px;top:982.00px;width:6px;height:6px;border-radius:50%;background:#8b8ca5"></div>
<div style="position:absolute;left:464px;top:1028.00px;width:2986px;height:2px;background:#f0f0f6"></div>
<svg style="position:absolute;left:514px;top:1064px" width="44" height="44" viewBox="0 0 44 44"><path d="M18.60,6.78 L19.27,1.68 L24.73,1.68 L25.40,6.78 L30.36,8.83 L34.44,5.70 L38.30,9.56 L35.17,13.64 L37.22,18.60 L42.32,19.27 L42.32,24.73 L37.22,25.40 L35.17,30.36 L38.30,34.44 L34.44,38.30 L30.36,35.17 L25.40,37.22 L24.73,42.32 L19.27,42.32 L18.60,37.22 L13.64,35.17 L9.56,38.30 L5.70,34.44 L8.83,30.36 L6.78,25.40 L1.68,24.73 L1.68,19.27 L6.78,18.60 L8.83,13.64 L5.70,9.56 L9.56,5.70 L13.64,8.83 Z" fill="none" stroke="#5b57e2" stroke-width="2.9" stroke-linejoin="round"/><circle cx="22" cy="22" r="5.6" fill="none" stroke="#5b57e2" stroke-width="2.9"/></svg>
<div style="position:absolute;left:592.75px;top:1052.97px;font-size:29.10px;line-height:29.10px;color:#2f70d3;font-weight:700;white-space:nowrap;">devesh-test</div>
<div style="position:absolute;left:592.75px;top:1096.46px;font-size:25.44px;line-height:25.44px;color:#6b6d85;white-space:nowrap;">ID: devesh-test</div>
<svg style="position:absolute;left:778.0px;top:1098.00px" width="24" height="24" viewBox="0 0 24 24"><path d="M7.5 7.5H3.7A2 2 0 0 0 1.7 9.5V20.1A2 2 0 0 0 3.7 22.1H14.3A2 2 0 0 0 16.3 20.1V16.3" fill="none" stroke="#2b2c38" stroke-width="1.7"/><rect x="7.5" y="1.7" width="14.6" height="14.6" rx="2" fill="none" stroke="#2b2c38" stroke-width="1.7"/></svg>
<div style="position:absolute;left:1240px;top:1058.00px;width:221px;height:56px;border-radius:11px;background:#e7e7fb"></div>
<svg style="position:absolute;left:1253.75px;top:1071.75px" width="28.5" height="28.5" viewBox="0 0 44 44"><path d="M18.60,6.78 L19.27,1.68 L24.73,1.68 L25.40,6.78 L30.36,8.83 L34.44,5.70 L38.30,9.56 L35.17,13.64 L37.22,18.60 L42.32,19.27 L42.32,24.73 L37.22,25.40 L35.17,30.36 L38.30,34.44 L34.44,38.30 L30.36,35.17 L25.40,37.22 L24.73,42.32 L19.27,42.32 L18.60,37.22 L13.64,35.17 L9.56,38.30 L5.70,34.44 L8.83,30.36 L6.78,25.40 L1.68,24.73 L1.68,19.27 L6.78,18.60 L8.83,13.64 L5.70,9.56 L9.56,5.70 L13.64,8.83 Z" fill="none" stroke="#5b5ae0" stroke-width="3.0" stroke-linejoin="round"/><circle cx="22" cy="22" r="5.6" fill="none" stroke="#5b5ae0" stroke-width="3.0"/></svg>
<div style="position:absolute;left:1293.00px;top:1073.00px;font-size:25.40px;line-height:25.40px;color:#5b5ae0;white-space:nowrap;transform:scaleX(0.9358);transform-origin:0.00px 0;">COMPONENT</div>
<div style="position:absolute;left:1753.60px;top:1071.11px;font-size:29.40px;line-height:29.40px;color:#2b2d3a;white-space:nowrap;">service</div>
<div style="position:absolute;left:2264px;top:1062.50px;width:47.5px;height:47px;border-radius:8px;background:#e5f5df"></div>
<svg style="position:absolute;left:2275.6px;top:1076.80px" width="24.6" height="21.1" viewBox="0 0 28 24"><circle cx="14" cy="6" r="4.2" fill="none" stroke="#51822f" stroke-width="1.7"/><path d="M11.5 10.2L7.5 21H20.5L16.5 10.2" fill="none" stroke="#51822f" stroke-width="1.7" stroke-linejoin="round"/><circle cx="5" cy="10" r="2.6" fill="none" stroke="#51822f" stroke-width="1.6"/><path d="M3.8 12.8L1 20H7.5M6.2 12.8L8 17" fill="none" stroke="#51822f" stroke-width="1.6" stroke-linejoin="round"/><circle cx="23" cy="10" r="2.6" fill="none" stroke="#51822f" stroke-width="1.6"/><path d="M24.2 12.8L27 20H20.5M21.8 12.8L20 17" fill="none" stroke="#51822f" stroke-width="1.6" stroke-linejoin="round"/></svg>
<div style="position:absolute;left:2328.75px;top:1071.11px;font-size:29.40px;line-height:29.40px;color:#16171e;white-space:nowrap;">s_account_all_users</div>
<div style="position:absolute;left:2776.50px;top:1071.11px;font-size:29.40px;line-height:29.40px;color:#2b2d3a;white-space:nowrap;">experimental</div>
<svg style="position:absolute;left:3300px;top:1067.00px" width="40" height="40" viewBox="0 0 40 40"><path d="M20.10,0.40 L25.92,12.19 L38.93,14.08 L29.52,23.26 L31.74,36.22 L20.10,30.10 L8.46,36.22 L10.68,23.26 L1.27,14.08 L14.28,12.19 Z" fill="#d7d8e3"/></svg>
<div style="position:absolute;left:3369px;top:1072.00px;width:6px;height:6px;border-radius:50%;background:#8b8ca5"></div>
<div style="position:absolute;left:3369px;top:1084.00px;width:6px;height:6px;border-radius:50%;background:#8b8ca5"></div>
<div style="position:absolute;left:3369px;top:1096.00px;width:6px;height:6px;border-radius:50%;background:#8b8ca5"></div>
<div style="position:absolute;left:464px;top:1142.00px;width:2986px;height:2px;background:#f0f0f6"></div>
<svg style="position:absolute;left:514px;top:1178px" width="44" height="44" viewBox="0 0 44 44"><path d="M18.60,6.78 L19.27,1.68 L24.73,1.68 L25.40,6.78 L30.36,8.83 L34.44,5.70 L38.30,9.56 L35.17,13.64 L37.22,18.60 L42.32,19.27 L42.32,24.73 L37.22,25.40 L35.17,30.36 L38.30,34.44 L34.44,38.30 L30.36,35.17 L25.40,37.22 L24.73,42.32 L19.27,42.32 L18.60,37.22 L13.64,35.17 L9.56,38.30 L5.70,34.44 L8.83,30.36 L6.78,25.40 L1.68,24.73 L1.68,19.27 L6.78,18.60 L8.83,13.64 L5.70,9.56 L9.56,5.70 L13.64,8.83 Z" fill="none" stroke="#5b57e2" stroke-width="2.9" stroke-linejoin="round"/><circle cx="22" cy="22" r="5.6" fill="none" stroke="#5b57e2" stroke-width="2.9"/></svg>
<div style="position:absolute;left:592.75px;top:1166.92px;font-size:29.15px;line-height:29.15px;color:#2f70d3;font-weight:700;white-space:nowrap;">et-collector</div>
<div style="position:absolute;left:592.75px;top:1210.43px;font-size:25.49px;line-height:25.49px;color:#6b6d85;white-space:nowrap;">ID: et-collector</div>
<svg style="position:absolute;left:771.2px;top:1212.00px" width="24" height="24" viewBox="0 0 24 24"><path d="M7.5 7.5H3.7A2 2 0 0 0 1.7 9.5V20.1A2 2 0 0 0 3.7 22.1H14.3A2 2 0 0 0 16.3 20.1V16.3" fill="none" stroke="#2b2c38" stroke-width="1.7"/><rect x="7.5" y="1.7" width="14.6" height="14.6" rx="2" fill="none" stroke="#2b2c38" stroke-width="1.7"/></svg>
<div style="position:absolute;left:1240px;top:1172.00px;width:221px;height:56px;border-radius:11px;background:#e7e7fb"></div>
<svg style="position:absolute;left:1253.75px;top:1185.75px" width="28.5" height="28.5" viewBox="0 0 44 44"><path d="M18.60,6.78 L19.27,1.68 L24.73,1.68 L25.40,6.78 L30.36,8.83 L34.44,5.70 L38.30,9.56 L35.17,13.64 L37.22,18.60 L42.32,19.27 L42.32,24.73 L37.22,25.40 L35.17,30.36 L38.30,34.44 L34.44,38.30 L30.36,35.17 L25.40,37.22 L24.73,42.32 L19.27,42.32 L18.60,37.22 L13.64,35.17 L9.56,38.30 L5.70,34.44 L8.83,30.36 L6.78,25.40 L1.68,24.73 L1.68,19.27 L6.78,18.60 L8.83,13.64 L5.70,9.56 L9.56,5.70 L13.64,8.83 Z" fill="none" stroke="#5b5ae0" stroke-width="3.0" stroke-linejoin="round"/><circle cx="22" cy="22" r="5.6" fill="none" stroke="#5b5ae0" stroke-width="3.0"/></svg>
<div style="position:absolute;left:1293.00px;top:1187.00px;font-size:25.40px;line-height:25.40px;color:#5b5ae0;white-space:nowrap;transform:scaleX(0.9358);transform-origin:0.00px 0;">COMPONENT</div>
<div style="position:absolute;left:1753.60px;top:1185.11px;font-size:29.40px;line-height:29.40px;color:#2b2d3a;white-space:nowrap;">Service</div>
<div style="position:absolute;left:2264px;top:1176.50px;width:47.5px;height:47px;border-radius:8px;background:#e5f5df"></div>
<svg style="position:absolute;left:2275.6px;top:1190.80px" width="24.6" height="21.1" viewBox="0 0 28 24"><circle cx="14" cy="6" r="4.2" fill="none" stroke="#51822f" stroke-width="1.7"/><path d="M11.5 10.2L7.5 21H20.5L16.5 10.2" fill="none" stroke="#51822f" stroke-width="1.7" stroke-linejoin="round"/><circle cx="5" cy="10" r="2.6" fill="none" stroke="#51822f" stroke-width="1.6"/><path d="M3.8 12.8L1 20H7.5M6.2 12.8L8 17" fill="none" stroke="#51822f" stroke-width="1.6" stroke-linejoin="round"/><circle cx="23" cy="10" r="2.6" fill="none" stroke="#51822f" stroke-width="1.6"/><path d="M24.2 12.8L27 20H20.5M21.8 12.8L20 17" fill="none" stroke="#51822f" stroke-width="1.6" stroke-linejoin="round"/></svg>
<div style="position:absolute;left:2328.75px;top:1185.11px;font-size:29.40px;line-height:29.40px;color:#16171e;white-space:nowrap;">etplayacc</div>
<div style="position:absolute;left:2776.50px;top:1185.11px;font-size:29.40px;line-height:29.40px;color:#2b2d3a;white-space:nowrap;">production</div>
<svg style="position:absolute;left:3300px;top:1181.00px" width="40" height="40" viewBox="0 0 40 40"><path d="M20.10,0.40 L25.92,12.19 L38.93,14.08 L29.52,23.26 L31.74,36.22 L20.10,30.10 L8.46,36.22 L10.68,23.26 L1.27,14.08 L14.28,12.19 Z" fill="#d7d8e3"/></svg>
<div style="position:absolute;left:3369px;top:1186.00px;width:6px;height:6px;border-radius:50%;background:#8b8ca5"></div>
<div style="position:absolute;left:3369px;top:1198.00px;width:6px;height:6px;border-radius:50%;background:#8b8ca5"></div>
<div style="position:absolute;left:3369px;top:1210.00px;width:6px;height:6px;border-radius:50%;background:#8b8ca5"></div>
<div style="position:absolute;left:464px;top:1256.00px;width:2986px;height:2px;background:#f0f0f6"></div>
<svg style="position:absolute;left:514px;top:1292px" width="44" height="44" viewBox="0 0 44 44"><path d="M18.60,6.78 L19.27,1.68 L24.73,1.68 L25.40,6.78 L30.36,8.83 L34.44,5.70 L38.30,9.56 L35.17,13.64 L37.22,18.60 L42.32,19.27 L42.32,24.73 L37.22,25.40 L35.17,30.36 L38.30,34.44 L34.44,38.30 L30.36,35.17 L25.40,37.22 L24.73,42.32 L19.27,42.32 L18.60,37.22 L13.64,35.17 L9.56,38.30 L5.70,34.44 L8.83,30.36 L6.78,25.40 L1.68,24.73 L1.68,19.27 L6.78,18.60 L8.83,13.64 L5.70,9.56 L9.56,5.70 L13.64,8.83 Z" fill="none" stroke="#5b57e2" stroke-width="2.9" stroke-linejoin="round"/><circle cx="22" cy="22" r="5.6" fill="none" stroke="#5b57e2" stroke-width="2.9"/></svg>
<div style="position:absolute;left:592.75px;top:1280.82px;font-size:29.27px;line-height:29.27px;color:#2f70d3;font-weight:700;white-space:nowrap;">et-receiver</div>
<div style="position:absolute;left:592.75px;top:1324.40px;font-size:25.51px;line-height:25.51px;color:#6b6d85;white-space:nowrap;">ID: et-receiver</div>
<svg style="position:absolute;left:767.1px;top:1326.00px" width="24" height="24" viewBox="0 0 24 24"><path d="M7.5 7.5H3.7A2 2 0 0 0 1.7 9.5V20.1A2 2 0 0 0 3.7 22.1H14.3A2 2 0 0 0 16.3 20.1V16.3" fill="none" stroke="#2b2c38" stroke-width="1.7"/><rect x="7.5" y="1.7" width="14.6" height="14.6" rx="2" fill="none" stroke="#2b2c38" stroke-width="1.7"/></svg>
<div style="position:absolute;left:1240px;top:1286.00px;width:221px;height:56px;border-radius:11px;background:#e7e7fb"></div>
<svg style="position:absolute;left:1253.75px;top:1299.75px" width="28.5" height="28.5" viewBox="0 0 44 44"><path d="M18.60,6.78 L19.27,1.68 L24.73,1.68 L25.40,6.78 L30.36,8.83 L34.44,5.70 L38.30,9.56 L35.17,13.64 L37.22,18.60 L42.32,19.27 L42.32,24.73 L37.22,25.40 L35.17,30.36 L38.30,34.44 L34.44,38.30 L30.36,35.17 L25.40,37.22 L24.73,42.32 L19.27,42.32 L18.60,37.22 L13.64,35.17 L9.56,38.30 L5.70,34.44 L8.83,30.36 L6.78,25.40 L1.68,24.73 L1.68,19.27 L6.78,18.60 L8.83,13.64 L5.70,9.56 L9.56,5.70 L13.64,8.83 Z" fill="none" stroke="#5b5ae0" stroke-width="3.0" stroke-linejoin="round"/><circle cx="22" cy="22" r="5.6" fill="none" stroke="#5b5ae0" stroke-width="3.0"/></svg>
<div style="position:absolute;left:1293.00px;top:1301.00px;font-size:25.40px;line-height:25.40px;color:#5b5ae0;white-space:nowrap;transform:scaleX(0.9358);transform-origin:0.00px 0;">COMPONENT</div>
<div style="position:absolute;left:1753.60px;top:1299.11px;font-size:29.40px;line-height:29.40px;color:#2b2d3a;white-space:nowrap;">Service</div>
<div style="position:absolute;left:2264px;top:1290.50px;width:47.5px;height:47px;border-radius:8px;background:#e5f5df"></div>
<svg style="position:absolute;left:2275.6px;top:1304.80px" width="24.6" height="21.1" viewBox="0 0 28 24"><circle cx="14" cy="6" r="4.2" fill="none" stroke="#51822f" stroke-width="1.7"/><path d="M11.5 10.2L7.5 21H20.5L16.5 10.2" fill="none" stroke="#51822f" stroke-width="1.7" stroke-linejoin="round"/><circle cx="5" cy="10" r="2.6" fill="none" stroke="#51822f" stroke-width="1.6"/><path d="M3.8 12.8L1 20H7.5M6.2 12.8L8 17" fill="none" stroke="#51822f" stroke-width="1.6" stroke-linejoin="round"/><circle cx="23" cy="10" r="2.6" fill="none" stroke="#51822f" stroke-width="1.6"/><path d="M24.2 12.8L27 20H20.5M21.8 12.8L20 17" fill="none" stroke="#51822f" stroke-width="1.6" stroke-linejoin="round"/></svg>
<div style="position:absolute;left:2328.75px;top:1299.11px;font-size:29.40px;line-height:29.40px;color:#16171e;white-space:nowrap;">etplayacc</div>
<div style="position:absolute;left:2776.50px;top:1299.11px;font-size:29.40px;line-height:29.40px;color:#2b2d3a;white-space:nowrap;">production</div>
<svg style="position:absolute;left:3300px;top:1295.00px" width="40" height="40" viewBox="0 0 40 40"><path d="M20.10,0.40 L25.92,12.19 L38.93,14.08 L29.52,23.26 L31.74,36.22 L20.10,30.10 L8.46,36.22 L10.68,23.26 L1.27,14.08 L14.28,12.19 Z" fill="#d7d8e3"/></svg>
<div style="position:absolute;left:3369px;top:1300.00px;width:6px;height:6px;border-radius:50%;background:#8b8ca5"></div>
<div style="position:absolute;left:3369px;top:1312.00px;width:6px;height:6px;border-radius:50%;background:#8b8ca5"></div>
<div style="position:absolute;left:3369px;top:1324.00px;width:6px;height:6px;border-radius:50%;background:#8b8ca5"></div>
<div style="position:absolute;left:464px;top:1370.00px;width:2986px;height:2px;background:#f0f0f6"></div>
<svg style="position:absolute;left:514px;top:1406px" width="44" height="44" viewBox="0 0 44 44"><path d="M18.60,6.78 L19.27,1.68 L24.73,1.68 L25.40,6.78 L30.36,8.83 L34.44,5.70 L38.30,9.56 L35.17,13.64 L37.22,18.60 L42.32,19.27 L42.32,24.73 L37.22,25.40 L35.17,30.36 L38.30,34.44 L34.44,38.30 L30.36,35.17 L25.40,37.22 L24.73,42.32 L19.27,42.32 L18.60,37.22 L13.64,35.17 L9.56,38.30 L5.70,34.44 L8.83,30.36 L6.78,25.40 L1.68,24.73 L1.68,19.27 L6.78,18.60 L8.83,13.64 L5.70,9.56 L9.56,5.70 L13.64,8.83 Z" fill="none" stroke="#5b57e2" stroke-width="2.9" stroke-linejoin="round"/><circle cx="22" cy="22" r="5.6" fill="none" stroke="#5b57e2" stroke-width="2.9"/></svg>
<div style="position:absolute;left:592.75px;top:1394.68px;font-size:29.44px;line-height:29.44px;color:#2f70d3;font-weight:700;white-space:nowrap;">et-service</div>
<div style="position:absolute;left:592.75px;top:1438.34px;font-size:25.59px;line-height:25.59px;color:#6b6d85;white-space:nowrap;">ID: et-service</div>
<svg style="position:absolute;left:757.6px;top:1440.00px" width="24" height="24" viewBox="0 0 24 24"><path d="M7.5 7.5H3.7A2 2 0 0 0 1.7 9.5V20.1A2 2 0 0 0 3.7 22.1H14.3A2 2 0 0 0 16.3 20.1V16.3" fill="none" stroke="#2b2c38" stroke-width="1.7"/><rect x="7.5" y="1.7" width="14.6" height="14.6" rx="2" fill="none" stroke="#2b2c38" stroke-width="1.7"/></svg>
<div style="position:absolute;left:1240px;top:1400.00px;width:221px;height:56px;border-radius:11px;background:#e7e7fb"></div>
<svg style="position:absolute;left:1253.75px;top:1413.75px" width="28.5" height="28.5" viewBox="0 0 44 44"><path d="M18.60,6.78 L19.27,1.68 L24.73,1.68 L25.40,6.78 L30.36,8.83 L34.44,5.70 L38.30,9.56 L35.17,13.64 L37.22,18.60 L42.32,19.27 L42.32,24.73 L37.22,25.40 L35.17,30.36 L38.30,34.44 L34.44,38.30 L30.36,35.17 L25.40,37.22 L24.73,42.32 L19.27,42.32 L18.60,37.22 L13.64,35.17 L9.56,38.30 L5.70,34.44 L8.83,30.36 L6.78,25.40 L1.68,24.73 L1.68,19.27 L6.78,18.60 L8.83,13.64 L5.70,9.56 L9.56,5.70 L13.64,8.83 Z" fill="none" stroke="#5b5ae0" stroke-width="3.0" stroke-linejoin="round"/><circle cx="22" cy="22" r="5.6" fill="none" stroke="#5b5ae0" stroke-width="3.0"/></svg>
<div style="position:absolute;left:1293.00px;top:1415.00px;font-size:25.40px;line-height:25.40px;color:#5b5ae0;white-space:nowrap;transform:scaleX(0.9358);transform-origin:0.00px 0;">COMPONENT</div>
<div style="position:absolute;left:1753.60px;top:1413.11px;font-size:29.40px;line-height:29.40px;color:#2b2d3a;white-space:nowrap;">Service</div>
<div style="position:absolute;left:2264px;top:1404.50px;width:47.5px;height:47px;border-radius:8px;background:#e5f5df"></div>
<svg style="position:absolute;left:2275.6px;top:1418.80px" width="24.6" height="21.1" viewBox="0 0 28 24"><circle cx="14" cy="6" r="4.2" fill="none" stroke="#51822f" stroke-width="1.7"/><path d="M11.5 10.2L7.5 21H20.5L16.5 10.2" fill="none" stroke="#51822f" stroke-width="1.7" stroke-linejoin="round"/><circle cx="5" cy="10" r="2.6" fill="none" stroke="#51822f" stroke-width="1.6"/><path d="M3.8 12.8L1 20H7.5M6.2 12.8L8 17" fill="none" stroke="#51822f" stroke-width="1.6" stroke-linejoin="round"/><circle cx="23" cy="10" r="2.6" fill="none" stroke="#51822f" stroke-width="1.6"/><path d="M24.2 12.8L27 20H20.5M21.8 12.8L20 17" fill="none" stroke="#51822f" stroke-width="1.6" stroke-linejoin="round"/></svg>
<div style="position:absolute;left:2328.75px;top:1413.11px;font-size:29.40px;line-height:29.40px;color:#16171e;white-space:nowrap;">etplayacc</div>
<div style="position:absolute;left:2776.50px;top:1413.11px;font-size:29.40px;line-height:29.40px;color:#2b2d3a;white-space:nowrap;">production</div>
<svg style="position:absolute;left:3300px;top:1409.00px" width="40" height="40" viewBox="0 0 40 40"><path d="M20.10,0.40 L25.92,12.19 L38.93,14.08 L29.52,23.26 L31.74,36.22 L20.10,30.10 L8.46,36.22 L10.68,23.26 L1.27,14.08 L14.28,12.19 Z" fill="#d7d8e3"/></svg>
<div style="position:absolute;left:3369px;top:1414.00px;width:6px;height:6px;border-radius:50%;background:#8b8ca5"></div>
<div style="position:absolute;left:3369px;top:1426.00px;width:6px;height:6px;border-radius:50%;background:#8b8ca5"></div>
<div style="position:absolute;left:3369px;top:1438.00px;width:6px;height:6px;border-radius:50%;background:#8b8ca5"></div>
<div style="position:absolute;left:464px;top:1484.00px;width:2986px;height:2px;background:#f0f0f6;box-shadow:0 2.5px 3px rgba(0,0,0,0.08)"></div>
<div style="position:absolute;left:1208px;top:252px;width:6px;height:1233.0px;background:linear-gradient(to right,rgba(30,30,70,0.10),rgba(30,30,70,0.03) 50%,rgba(30,30,70,0))"></div>
<div style="position:absolute;left:3246px;top:252px;width:6px;height:1233.0px;background:linear-gradient(to left,rgba(30,30,70,0.10),rgba(30,30,70,0.03) 50%,rgba(30,30,70,0))"></div>
</div></body></html>
